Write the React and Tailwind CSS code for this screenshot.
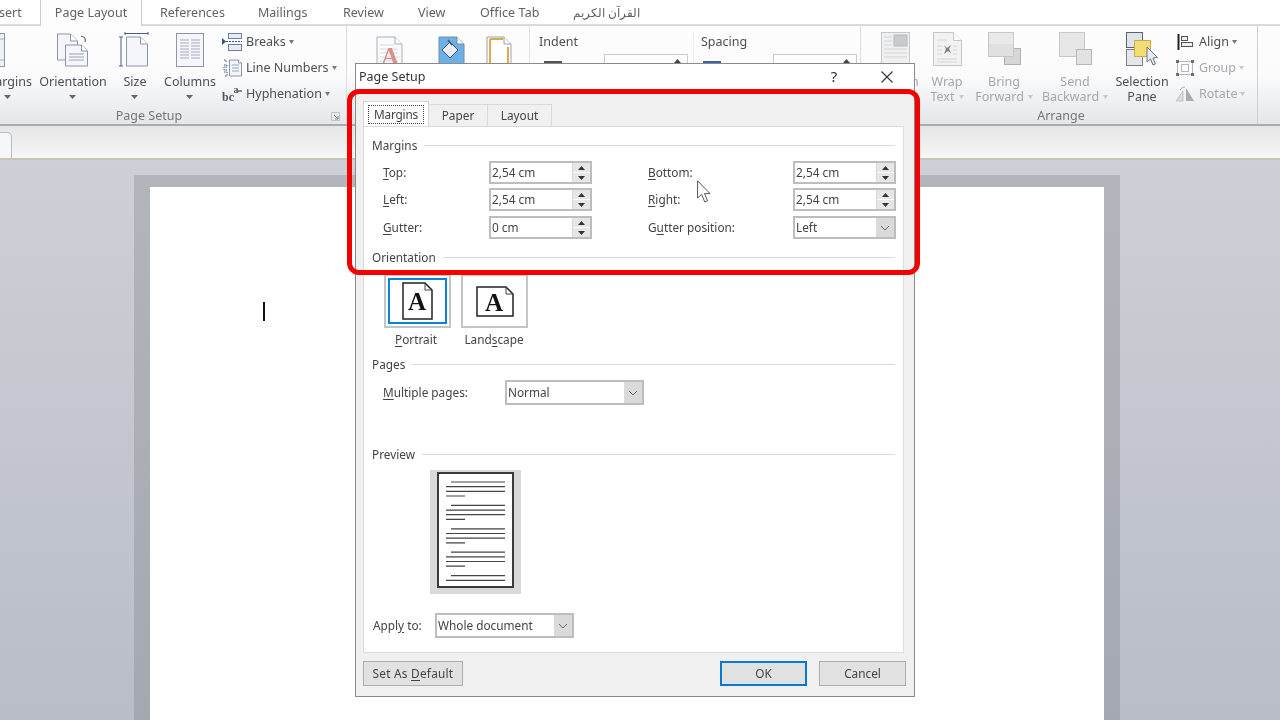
import React from "react";

const F = { fontFamily: '"Noto Sans", "Open Sans", "Liberation Sans", sans-serif' };

function Caret({ c = "#666", w = 7 }) {
  return <svg width={w} height="4" viewBox="0 0 7 4" preserveAspectRatio="none" className="inline-block"><path d="M0 0H7L3.5 4Z" fill={c} /></svg>;
}

/* ---------- ribbon icons ---------- */
const Page = ({ x, y, w, h, ear = 7, fill = "#f4f6fb", stroke = "#8d95a8" }) => (
  <g>
    <path d={`M${x} ${y}H${x + w - ear}L${x + w} ${y + ear}V${y + h}H${x}Z`} fill={fill} stroke={stroke} />
    <path d={`M${x + w - ear} ${y}V${y + ear}H${x + w}`} fill="#fff" stroke={stroke} />
  </g>
);

const IconMargins = () => (
  <svg width="30" height="36" viewBox="0 0 30 36">
    <rect x="0.5" y="1.5" width="21" height="33" fill="#eef1f7" stroke="#8d95a8" />
    <path d="M0 7H21M0 28H21M15 1V34" stroke="#a8aec0" />
  </svg>
);
const IconOrientation = () => (
  <svg width="34" height="36" viewBox="0 0 34 36">
    <Page x={1.5} y={2} w={20} h={26} />
    <Page x={9.5} y={13} w={22} h={21} ear={6} />
    <path d="M13 22H28M13 25H28M13 28H28" stroke="#9aa3b8" />
    <path d="M25 4C29 5 30 7 29 10" fill="none" stroke="#5b6478" strokeWidth="1.2" />
  </svg>
);
const IconSize = () => (
  <svg width="30" height="36" viewBox="0 0 30 36" className="overflow-visible">
    <path d="M5 1.5H28M5 0V3M28 0V3" stroke="#4a5a90" fill="none" />
    <path d="M1 5V34M-1 5H3M-1 34H3" stroke="#4a5a90" fill="none" />
    <Page x={6.5} y={5} w={21} h={29} ear={7} />
  </svg>
);
const IconColumns = () => (
  <svg width="30" height="36" viewBox="0 0 30 36">
    <rect x="1.5" y="1.5" width="27" height="33" fill="#f4f6fb" stroke="#8d95a8" />
    <path d="M5 8H14M5 11H14M5 14H14M5 17H14M5 20H14M5 23H14M5 26H14M16 8H25M16 11H25M16 14H25M16 17H25M16 20H25M16 23H25M16 26H25" stroke="#a3abc0" />
  </svg>
);
const IconBreaks = () => (
  <svg width="20" height="18" viewBox="0 0 20 18">
    <rect x="6.5" y="0.5" width="13" height="5" fill="#e6ebf5" stroke="#6d7da3" />
    <path d="M4 8.5H20" stroke="#34508f" strokeDasharray="2 1" />
    <rect x="6.5" y="11.5" width="13" height="6" fill="#e6ebf5" stroke="#6d7da3" />
    <path d="M0 5L4 8.5L0 12Z" fill="#34508f" />
  </svg>
);
const IconLineNumbers = () => (
  <svg width="20" height="18" viewBox="0 0 20 18">
    <Page x={7.5} y={1} w={12} h={16} ear={3} />
    <path d="M10 6H17M10 9H17M10 12H17" stroke="#9aa3b8" />
    <path d="M2 1H4V4M2 6H5V8H2V11H5M2 13H5V17H2" fill="none" stroke="#34508f" strokeDasharray="1.5 1" />
  </svg>
);
const IconHyphen = () => (
  <svg width="20" height="18" viewBox="0 0 20 18">
    <text x="0" y="16" fontSize="12" fontWeight="700" fontFamily="Liberation Serif, serif" fill="#4b5565">bc</text>
    <text x="11.5" y="8" fontSize="10" fontWeight="700" fontFamily="Liberation Serif, serif" fill="#4b5565">a</text>
    <path d="M16 6H20" stroke="#4b5565" strokeWidth="1.3" />
  </svg>
);
const IconWatermark = () => (
  <svg width="27" height="30" viewBox="0 0 27 30" className="overflow-visible">
    <Page x={1} y={1} w={25} h={29} ear={7} fill="#fafafa" stroke="#a9afbd" />
    <path d="M4 9H18M4 13H22M4 17H22M4 21H22M4 25H22" stroke="#d8dbe3" />
    <text x="5" y="29" fontSize="25" fontWeight="700" fontFamily="Liberation Serif, serif" fill="#dc8f8a">A</text>
  </svg>
);
const IconPageColor = () => (
  <svg width="27" height="30" viewBox="0 0 27 30">
    <Page x={1} y={1} w={25} h={29} ear={7} fill="#6ab1e8" stroke="#7f8aa0" />
    <path d="M12 6L20 14L12 22L4 14Z" fill="#e8edf6" stroke="#4a5570" />
    <path d="M10 4L14 9" stroke="#4a5570" strokeWidth="1.5" />
  </svg>
);
const IconPageBorders = () => (
  <svg width="26" height="30" viewBox="0 0 26 30">
    <Page x={1} y={1} w={24} h={29} ear={7} fill="#fff" stroke="#9aa0ae" />
    <path d="M4 3H17M4 3V28H22V11" fill="none" stroke="#e8a64c" strokeWidth="2" />
  </svg>
);
const IconPosition = () => (
  <svg width="29" height="34" viewBox="0 0 29 34">
    <rect x="0.5" y="0.5" width="28" height="33" fill="#f0f0f0" stroke="#c6c8cc" />
    <rect x="13" y="3" width="13" height="11" fill="#c9cbcf" stroke="#b5b7bb" />
    <path d="M3 5H11M3 9H11M3 13H11M3 17H26M3 21H26M3 25H26" stroke="#d2d4d8" />
  </svg>
);
const IconWrap = () => (
  <svg width="29" height="34" viewBox="0 0 29 34">
    <Page x={0.5} y={0.5} w={28} h={33} ear={8} fill="#f2f2f2" stroke="#c4c6ca" />
    <path d="M4 8H14M4 27H24M4 30H24M4 14H9M20 14H24M4 18H9M20 18H24M4 22H9M20 22H24" stroke="#d2d4d8" />
    <path d="M11 13L14 16L18 13L16 17L18 21L15 19L11 22L13 17Z" fill="#7a7c80" />
  </svg>
);
const IconBring = () => (
  <svg width="33" height="33" viewBox="0 0 33 33">
    <rect x="16.5" y="16.5" width="16" height="16" fill="#d6d6d6" stroke="#aeb0b3" />
    <rect x="0.5" y="0.5" width="25" height="24" fill="#e0e0e0" stroke="#c8c8c8" />
    <rect x="1" y="1" width="24" height="11" fill="#e9e9e9" />
  </svg>
);
const IconSend = () => (
  <svg width="33" height="33" viewBox="0 0 33 33">
    <rect x="0.5" y="0.5" width="25" height="24" fill="#e6e6e6" stroke="#c8c8c8" />
    <rect x="17.5" y="17.5" width="15" height="15" fill="#e2e2e2" stroke="#b4b6b9" />
  </svg>
);
const IconSelection = () => (
  <svg width="33" height="35" viewBox="0 0 33 35">
    <rect x="0.5" y="0.5" width="16" height="15" fill="#dfe3ea" stroke="#5a6372" />
    <rect x="0.5" y="17.5" width="16" height="16" fill="#e4e6ea" stroke="#7a808c" />
    <rect x="8.5" y="8.5" width="16" height="16" fill="#f3dc72" stroke="#c9ae45" />
    <path d="M21 15L21 30L24.5 27L27 33L29.5 32L27 26L31.5 25.5Z" fill="#e6ebf3" stroke="#6c7484" />
  </svg>
);
const IconAlign = () => (
  <svg width="16" height="16" viewBox="0 0 16 16">
    <path d="M1.5 0V16" stroke="#222" strokeWidth="2" />
    <rect x="4.5" y="2.5" width="6" height="4" fill="#eee" stroke="#555" />
    <rect x="4.5" y="8.5" width="11" height="4" fill="#eee" stroke="#555" />
  </svg>
);
const IconGroup = () => (
  <svg width="20" height="18" viewBox="0 0 20 18">
    <rect x="2.5" y="2.5" width="15" height="13" fill="none" stroke="#b5b7ba" />
    <rect x="6.5" y="5.5" width="7" height="7" fill="none" stroke="#b5b7ba" />
    <path d="M1 1H4V4H1ZM16 1H19V4H16ZM1 14H4V17H1ZM16 14H19V17H16Z" fill="#6d6f72" />
  </svg>
);
const IconRotate = () => (
  <svg width="20" height="16" viewBox="0 0 20 16">
    <path d="M1 15L8 5V15Z" fill="#dadbdd" stroke="#c2c4c7" />
    <path d="M11 15V2L19 15Z" fill="#a9abae" />
    <path d="M5 4C6 2 8 1 10 1" fill="none" stroke="#a9abae" />
  </svg>
);

/* ---------- ribbon parts ---------- */
function BigBtn({ width, icon, lines, caret, disabled }) {
  const color = disabled ? "text-[#a6a8ab]" : "text-[#4d4f52]";
  return (
    <div className={`${width} flex flex-col items-center`}>
      <div className="h-[48px] pt-[6px] flex justify-center">{icon}</div>
      <div className={`flex flex-col items-center text-[12.5px] leading-[15px] whitespace-nowrap ${color}`}>
        <span>{lines[0]}</span>
        <span className="flex items-center gap-[4px] h-[15px]">
          {lines[1]}
          {caret && <Caret c={disabled ? "#c9c9c9" : "#666"} w={disabled ? 5 : 7} />}
        </span>
      </div>
    </div>
  );
}

function SmallBtn({ icon, label, disabled }) {
  return (
    <div className={`flex items-center h-[26px] gap-[3px] text-[12.5px] whitespace-nowrap ${disabled ? "text-[#a6a8ab]" : "text-[#4d4f52]"}`}>
      <span className="w-[20px] flex justify-center">{icon}</span>
      <span className="ml-[1px]">{label}</span>
      <span className="flex"><Caret c={disabled ? "#c9c9c9" : "#777"} w={5} /></span>
    </div>
  );
}

function Ribbon() {
  return (
    <div className="h-[100px] flex border-b-2 border-[#a9abb0] bg-gradient-to-b from-[#fdfdfe] via-[#fbfbfc] to-[#e4e6ea] shrink-0 overflow-hidden">
      {/* Page Setup */}
      <div className="w-[347px] shrink-0 flex flex-col border-r border-[#dcdde0] relative">
        <div className="h-[81px] flex">
          <div className="ml-[-22px] flex">
            <BigBtn width="w-[60px]" icon={<div className="ml-[-20px]"><IconMargins /></div>} lines={["Margins", ""]} caret />
            <BigBtn width="w-[70px]" icon={<IconOrientation />} lines={["Orientation", ""]} caret />
            <BigBtn width="w-[54px]" icon={<IconSize />} lines={["Size", ""]} caret />
            <BigBtn width="w-[56px]" icon={<IconColumns />} lines={["Columns", ""]} caret />
          </div>
          <div className="ml-[4px] pt-[3px] flex flex-col">
            <SmallBtn icon={<IconBreaks />} label="Breaks" />
            <SmallBtn icon={<IconLineNumbers />} label="Line Numbers" />
            <SmallBtn icon={<IconHyphen />} label="Hyphenation" />
          </div>
        </div>
        <div className="h-[17px] pt-[2px] flex items-center justify-center text-[12.5px] text-[#74767a] pr-[48px]">Page Setup</div>
        <svg width="9" height="9" viewBox="0 0 9 9" className="absolute right-[6px] bottom-[3px]">
          <path d="M0.5 0.5H8.5V8.5H0.5Z" fill="none" stroke="#c0c2c6" />
          <path d="M3 3L7 7M7 4V7H4" fill="none" stroke="#85878b" />
        </svg>
      </div>
      {/* Page Background */}
      <div className="w-[183px] shrink-0 border-r border-[#e2e3e6] flex pt-[10px] pl-[29px] gap-[35px]">
        <IconWatermark />
        <IconPageColor />
        <div className="ml-[-14px]"><IconPageBorders /></div>
      </div>
      {/* Paragraph */}
      <div className="w-[331px] shrink-0 border-r border-[#dcdde0] flex pt-[7px] text-[12.5px] text-[#4d4f52]">
        <div className="w-[164px] pl-[9px] border-r border-[#eceded] h-[60px]">
          <div className="leading-[18px]">Indent</div>
          <div className="flex items-center mt-[3px]">
            <div className="w-[18px] h-[7px] border-t-2 border-[#555] ml-[5px]" />
            <div className="ml-[42px] w-[84px] h-[20px] bg-white border border-[#c8cad0] flex justify-end pr-[6px] pt-[4px]">
              <svg width="7" height="4" viewBox="0 0 7 4"><path d="M0 4H7L3.5 0Z" fill="#444" /></svg>
            </div>
          </div>
        </div>
        <div className="w-[166px] pl-[7px]">
          <div className="leading-[18px]">Spacing</div>
          <div className="flex items-center mt-[3px]">
            <div className="w-[18px] h-[7px] border-t-2 border-[#3c62b0] ml-[2px]" />
            <div className="ml-[52px] w-[84px] h-[20px] bg-white border border-[#c8cad0] flex justify-end pr-[6px] pt-[4px]">
              <svg width="7" height="4" viewBox="0 0 7 4"><path d="M0 4H7L3.5 0Z" fill="#444" /></svg>
            </div>
          </div>
        </div>
      </div>
      {/* Arrange */}
      <div className="w-[397px] shrink-0 flex flex-col border-r border-[#cfd0d3]">
        <div className="h-[81px] flex">
          <BigBtn width="w-[68px]" disabled icon={<IconPosition />} lines={["Position", ""]} caret />
          <BigBtn width="w-[36px]" disabled icon={<IconWrap />} lines={["Wrap", "Text"]} caret />
          <BigBtn width="w-[78px]" disabled icon={<IconBring />} lines={["Bring", "Forward"]} caret />
          <BigBtn width="w-[64px]" disabled icon={<IconSend />} lines={["Send", "Backward"]} caret />
          <BigBtn width="w-[70px]" icon={<IconSelection />} lines={["Selection", "Pane"]} />
          <div className="ml-[-2px] pt-[3px] flex flex-col">
            <SmallBtn icon={<IconAlign />} label="Align" />
            <SmallBtn disabled icon={<IconGroup />} label="Group" />
            <SmallBtn disabled icon={<IconRotate />} label="Rotate" />
          </div>
        </div>
        <div className="h-[17px] pt-[2px] pl-[4px] flex items-center justify-center text-[12.5px] text-[#74767a]">Arrange</div>
      </div>
    </div>
  );
}

function TabBar() {
  const tab = "text-[12.5px] text-[#5f6266] whitespace-nowrap mt-[4px]";
  return (
    <div className="h-[26px] shrink-0 bg-white border-b-2 border-[#d9dadc] flex items-start">
      <span className={`${tab} ml-[-1px] w-[41px]`}>sert</span>
      <div className="w-[102px] h-[26px] bg-[#fdfdfe] border-x border-[#cfd0d3] flex justify-center pt-[4px] text-[12.5px] text-[#5f6266]">Page Layout</div>
      <span className={`${tab} ml-[18px] w-[65px]`}>References</span>
      <span className={`${tab} ml-[33px] w-[52px]`}>Mailings</span>
      <span className={`${tab} ml-[33px] w-[42px]`}>Review</span>
      <span className={`${tab} ml-[33px] w-[29px]`}>View</span>
      <span className={`${tab} ml-[33px] w-[60px] tracking-[0.1px]`}>Office Tab</span>
      <span className={`${tab} ml-[33px] text-[12px]`} dir="rtl">القرآن الكريم</span>
    </div>
  );
}

/* ---------- dialog parts ---------- */
function Heading({ children, className = "" }) {
  return (
    <div className={`flex items-center h-[18px] ${className}`}>
      <span className="mr-[7px] pt-[2px]">{children}</span>
      <div className="flex-1 h-px bg-[#dcdcdc]" />
    </div>
  );
}

const Arrow = ({ up }) => (
  <svg width="7" height="4" viewBox="0 0 7 4"><path d={up ? "M0 4H7L3.5 0Z" : "M0 0H7L3.5 4Z"} fill="#333" /></svg>
);

function Spin({ value }) {
  return (
    <div className="w-[103px] h-full border-2 border-[#bdbdbd] bg-white flex text-[11.8px] text-[#444]">
      <div className="flex-1 pl-[1px] flex items-center">{value}</div>
      <div className="w-[18px] flex flex-col gap-px border-l border-[#d8d8d8]">
        <div className="flex-1 bg-[#e6e6e6] flex items-center justify-center"><Arrow up /></div>
        <div className="flex-1 bg-[#e6e6e6] flex items-center justify-center"><Arrow /></div>
      </div>
    </div>
  );
}

function Select({ value, width }) {
  return (
    <div className={`${width} h-full border-2 border-[#bdbdbd] bg-white flex text-[11.8px] text-[#444]`}>
      <div className="flex-1 pl-[1px] flex items-center">{value}</div>
      <div className="w-[18px] bg-[#dadada] flex items-center justify-center">
        <svg width="10" height="6" viewBox="0 0 10 6"><path d="M1 1L5 5L9 1" fill="none" stroke="#666" /></svg>
      </div>
    </div>
  );
}

const U = ({ children }) => <span className="underline underline-offset-2">{children}</span>;

function MarginRow({ mt, l1, v1, l2, right }) {
  return (
    <div className={`flex items-center h-[23px] ${mt} ml-[11px] mr-[-1px]`}>
      <div className="w-[106px]">{l1}</div>
      <Spin value={v1} />
      <div className="w-[56px]" />
      <div className="w-[145px]">{l2}</div>
      {right}
    </div>
  );
}

function OrientBtn({ selected, children }) {
  return (
    <div className="w-[67px] h-[54px] border-2 border-[#c4c4c4] flex items-center justify-center bg-white">
      <div className={`w-[59px] h-[46px] flex items-center justify-center border-2 ${selected ? "border-[#0a84d8]" : "border-transparent"}`}>
        {children}
      </div>
    </div>
  );
}

function PreviewBox() {
  const tops = [10, 33.4, 56.8, 80.2];
  return (
    <div className="w-[91px] h-[124px] bg-[#d9d9d9] ml-[58px] mt-[7px] pt-[2px] pl-[7px]">
      <svg width="77" height="116" viewBox="0 0 77 116" className="block">
        <rect x="1" y="1" width="75" height="114" fill="#fff" stroke="#3a3a3a" strokeWidth="2" />
        <g stroke="#444" strokeWidth="1.2">
          {tops.map((t) => (
            <path key={t} d={`M14 ${t}H68M9 ${t + 4.7}H68M9 ${t + 9.3}H68M9 ${t + 14}H28`} />
          ))}
          <path d="M14 103.6H68M9 108.3H68" />
        </g>
      </svg>
    </div>
  );
}

function Btn({ width, children, def, wide }) {
  return (
    <div className={`${width} h-[25px] flex items-center justify-center bg-[#e1e1e1] text-[11.8px] text-[#444] ${def ? "border-2 border-[#0a78d0]" : "border border-[#adadad]"}`}>
      <span className={wide ? "tracking-[0.25px]" : ""}>{children}</span>
    </div>
  );
}

function Dialog() {
  return (
    <div className="absolute left-[355px] top-[63px] w-[560px] h-[634px] bg-[#f0f0f0] border border-[#8a8a8a] flex flex-col text-[11.8px] text-[#444]" style={F}>
      {/* title */}
      <div className="h-[30px] bg-white shrink-0 flex items-start pl-[3px] text-[12.5px] text-[#333]">
        <span className="flex-1 mt-[4px]">Page Setup</span>
        <span className="w-[20px] text-center text-[15px] mr-[37px] mt-[1px]">?</span>
        <svg width="12" height="12" viewBox="0 0 12 12" className="mr-[21px] mt-[7px]"><path d="M0.5 0.5L11.5 11.5M11.5 0.5L0.5 11.5" stroke="#333" strokeWidth="1.1" /></svg>
      </div>
      {/* tabs */}
      <div className="h-[32px] shrink-0 flex items-end pl-[7px]">
        <div className="w-[66px] h-[25px] bg-white border border-b-0 border-[#d9d9d9] flex items-center justify-center z-10">
          <span className="border border-dotted border-[#444] leading-[17px] w-[56px] text-center tracking-[-0.2px]">Margins</span>
        </div>
        <div className="w-[59px] h-[22px] border-t border-r border-[#d9d9d9] flex items-center justify-center">Paper</div>
        <div className="w-[64px] h-[22px] border-t border-r border-[#d9d9d9] flex items-center justify-center">Layout</div>
      </div>
      {/* panel */}
      <div className="w-[541px] h-[527px] ml-[7px] bg-white border border-[#dcdcdc] shrink-0 pt-[9px] pl-[8px] pr-[8px]">
        <Heading>Margins</Heading>
        <MarginRow mt="mt-[7px]" l1={<><U>T</U>op:</>} v1="2,54 cm" l2={<><U>B</U>ottom:</>} right={<Spin value="2,54 cm" />} />
        <MarginRow mt="mt-[4px]" l1={<><U>L</U>eft:</>} v1="2,54 cm" l2={<><U>R</U>ight:</>} right={<Spin value="2,54 cm" />} />
        <MarginRow mt="mt-[5px]" l1={<><U>G</U>utter:</>} v1="0 cm" l2={<>G<U>u</U>tter position:</>} right={<Select value="Left" width="w-[103px]" />} />
        <Heading className="mt-[9px]">Orientation</Heading>
        <div className="flex ml-[12px] mt-[8px] gap-[10px]">
          <OrientBtn selected>
            <svg width="31" height="38" viewBox="0 0 31 38">
              <path d="M1 1H23L30 8V37H1Z" fill="#fff" stroke="#222" strokeWidth="1.5" />
              <path d="M23 1V8H30" fill="none" stroke="#444" />
              <text x="15" y="28" textAnchor="middle" fontSize="25" fontWeight="700" fontFamily="Liberation Serif, serif" fill="#111">A</text>
            </svg>
          </OrientBtn>
          <OrientBtn>
            <svg width="38" height="31" viewBox="0 0 38 31">
              <path d="M1 1H30L37 8V30H1Z" fill="#fff" stroke="#222" strokeWidth="1.5" />
              <path d="M30 1V8H37" fill="none" stroke="#444" />
              <text x="18" y="25" textAnchor="middle" fontSize="25" fontWeight="700" fontFamily="Liberation Serif, serif" fill="#111">A</text>
            </svg>
          </OrientBtn>
        </div>
        <div className="flex ml-[12px] mt-[3px] h-[18px] items-center gap-[10px]">
          <div className="w-[67px] text-center pr-[3px]"><U>P</U>ortrait</div>
          <div className="w-[67px] text-center"><span className="ml-[-1px]">Land<U>s</U>cape</span></div>
        </div>
        <Heading className="mt-[6px]">Pages</Heading>
        <div className="flex items-center h-[25px] ml-[11px] mt-[7px]">
          <div className="w-[122px]"><U>M</U>ultiple pages:</div>
          <Select value="Normal" width="w-[139px]" />
        </div>
        <Heading className="mt-[40px]">Preview</Heading>
        <PreviewBox />
        <div className="flex items-center h-[25px] mt-[19px]">
          <div className="w-[63px] pl-[1px]">Appl<U>y</U> to:</div>
          <Select value="Whole document" width="w-[139px]" />
        </div>
      </div>
      {/* footer */}
      <div className="flex-1 flex items-center pl-[7px] pr-[8px] pb-[2px] gap-[12px]">
        <Btn width="w-[100px]" wide>Set As <U>D</U>efault</Btn>
        <div className="flex-1" />
        <Btn width="w-[87px]" def>OK</Btn>
        <Btn width="w-[87px]">Cancel</Btn>
      </div>
    </div>
  );
}

export default function App() {
  return (
    <div className="relative w-[1280px] h-[720px] overflow-hidden flex flex-col bg-white blur-[0.35px]" style={F}>
      <TabBar />
      <Ribbon />
      {/* document tab strip */}
      <div className="h-[34px] shrink-0 flex items-end border-b-2 border-[#c9c4b6] bg-gradient-to-b from-[#e6e6e6] to-[#f6f6f4]">
        <div className="w-[12px] h-[26px] bg-[#f6f7fa] border-r border-t border-[#b9bcc2] rounded-tr-[5px]" />
      </div>
      {/* document */}
      <div className="flex-1 flex flex-col pt-[15px] pl-[134px] pr-[160px] bg-gradient-to-b from-[#cdd0d6] to-[#b9bdc6] min-h-0">
        <div className="flex-1 flex flex-col pt-[12px] px-[16px] bg-gradient-to-b from-[#b2b5bb] to-[#a4a8b0]">
          <div className="flex-1 bg-white pl-[113px] pt-[115px]">
            <div className="w-[2px] h-[19px] bg-[#111]" />
          </div>
        </div>
      </div>

      <Dialog />

      {/* red highlight */}
      <div className="absolute left-[347px] top-[89px] w-[573px] h-[186px] border-[5px] border-[#f30000] rounded-[12px] pointer-events-none" />

      {/* mouse cursor */}
      <svg width="16" height="24" viewBox="0 0 16 24" className="absolute left-[697px] top-[180px]">
        <path d="M0.6 0.8V18L4.6 14.5L7.8 22L10.6 20.8L7.5 13.6H13Z" fill="#fff" stroke="#555" strokeWidth="1" />
      </svg>
    </div>
  );
}
